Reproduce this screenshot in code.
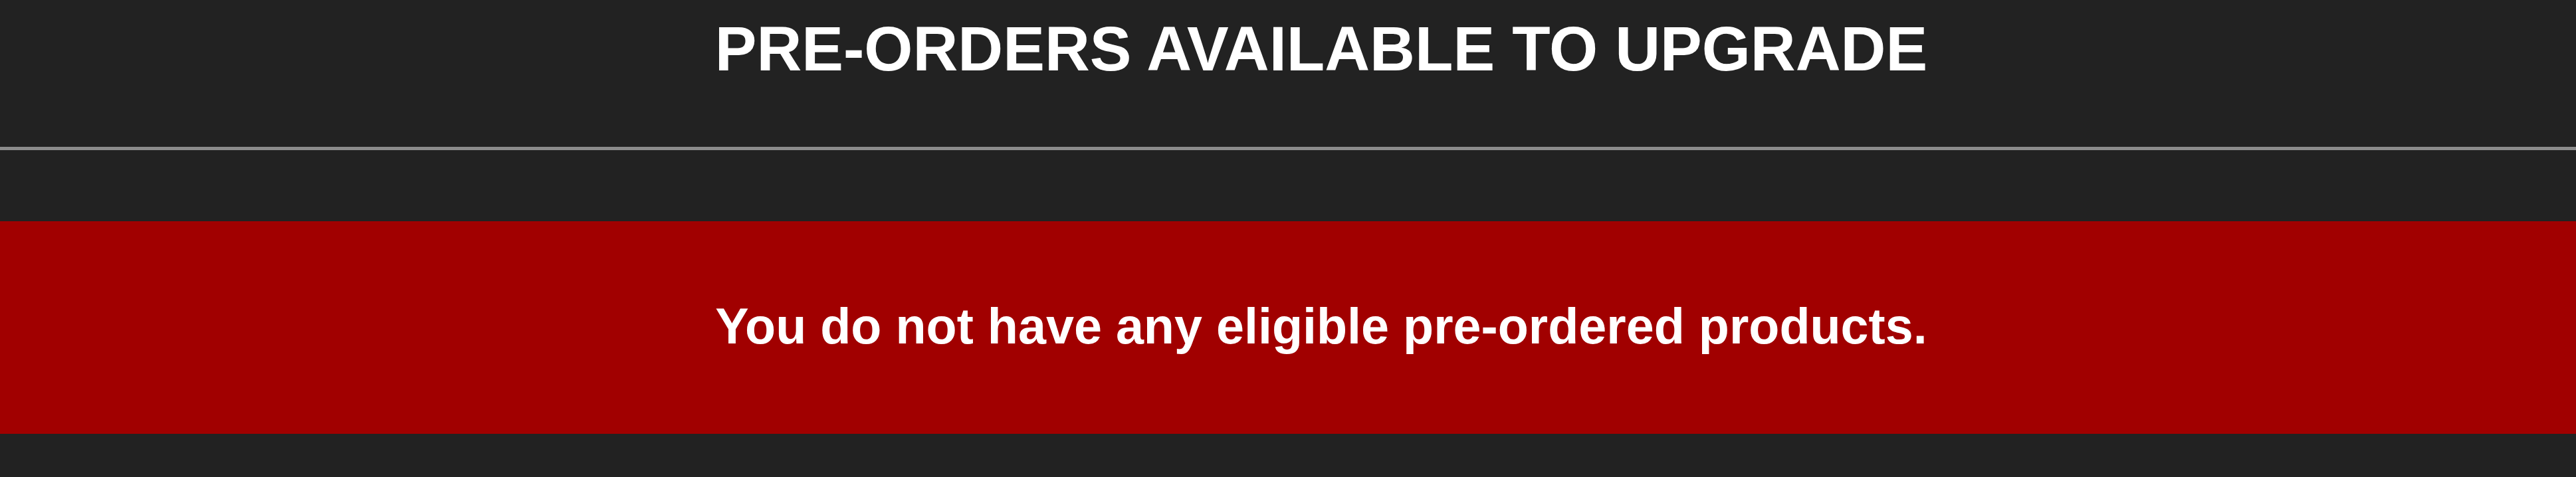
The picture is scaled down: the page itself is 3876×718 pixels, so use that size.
import React from "react";

export default function App() {
  return (
    <div
      className="w-full h-[718px] bg-[#222222] overflow-hidden"
      style={{ fontFamily: '"Liberation Sans", Arial, sans-serif' }}
    >
      <div className="h-[221px] pt-[27px] pl-[100px]">
        <h1 className="text-center text-white font-bold text-[94px] leading-[94px]">
          PRE-ORDERS AVAILABLE TO UPGRADE
        </h1>
      </div>
      <div className="h-[5px] bg-[#8c8c8c]" />
      <div className="h-[107px]" />
      <div className="h-[320px] bg-[#a10000] pt-[121px] pl-[100px]">
        <p className="text-center text-white font-bold text-[75.5px] leading-[75px]">
          You do not have any eligible pre-ordered products.
        </p>
      </div>
    </div>
  );
}
